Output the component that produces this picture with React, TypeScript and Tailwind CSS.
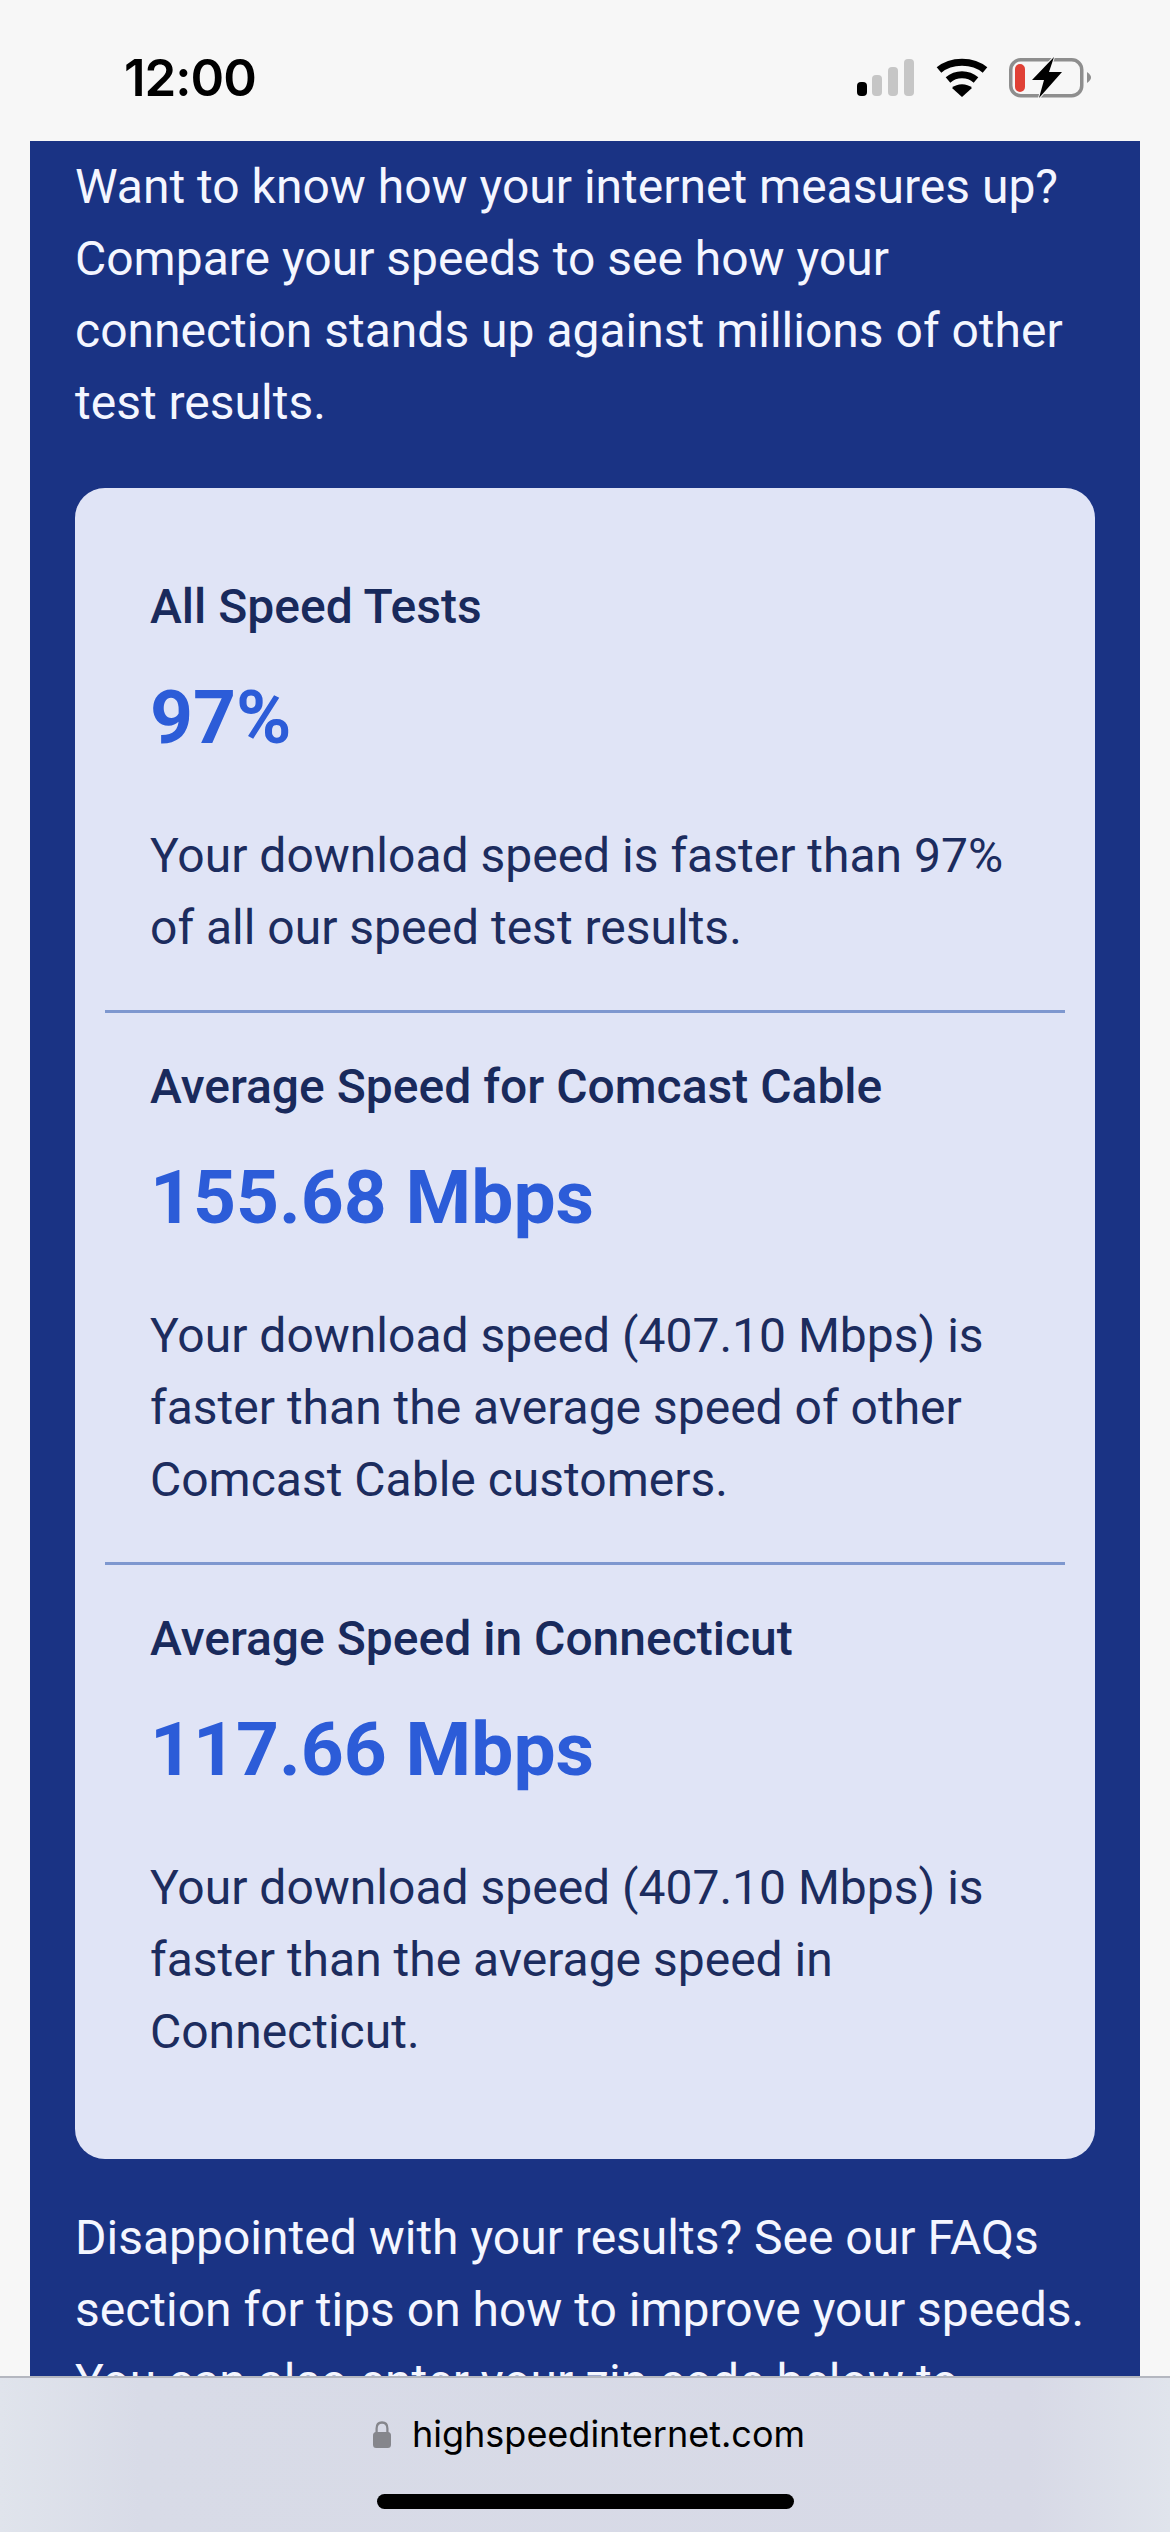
const stats = [
  {
    title: 'All Speed Tests',
    value: '97%',
    text: ['Your download speed is faster than 97%', 'of all our speed test results.'],
  },
  {
    title: 'Average Speed for Comcast Cable',
    value: '155.68 Mbps',
    text: ['Your download speed (407.10 Mbps) is', 'faster than the average speed of other', 'Comcast Cable customers.'],
  },
  {
    title: 'Average Speed in Connecticut',
    value: '117.66 Mbps',
    text: ['Your download speed (407.10 Mbps) is', 'faster than the average speed in', 'Connecticut.'],
  },
]

function StatusIcons() {
  return (
    <svg width="240" height="44" viewBox="0 0 240 44" className="block">
      {/* signal */}
      <rect x="0" y="26" width="10" height="14" rx="4" fill="#000" />
      <rect x="15" y="19" width="10" height="21" rx="4" fill="#c6c6c6" />
      <rect x="31" y="11" width="10" height="29" rx="4" fill="#c6c6c6" />
      <rect x="47" y="3" width="10" height="37" rx="4" fill="#c6c6c6" />
      {/* wifi */}
      <path d="M82 14C94 3.500 116 3.500 128 14" fill="none" stroke="#000" strokeWidth="7" />
      <path d="M91 24C99 17 111 17 119 24" fill="none" stroke="#000" strokeWidth="7" />
      <path d="M105 41L95 32C100 27 110 27 115 32Z" fill="#000" />
      {/* battery */}
      <rect x="153.750" y="3.750" width="71" height="36" rx="10" fill="none" stroke="#8e8e8e" strokeWidth="3.500" />
      <path d="M230 16C233 18 234 20 234 21.500C234 23 233 25 230 27Z" fill="#8e8e8e" />
      <rect x="158" y="8" width="10" height="28" rx="5" fill="#e04136" />
      <path d="M197 1L175 24H187L182 42L205 16H192L197 1Z" fill="#000" stroke="#f7f7f7" strokeWidth="2" paintOrder="stroke" />
    </svg>
  )
}

function Stat({ title, value, text, last }: { title: string; value: string; text: string[]; last: boolean }) {
  return (
    <div className={last ? 'px-[45px] pt-[38px]' : 'px-[45px] pt-[38px] pb-[46px] border-b-[3px] border-[#7e97cf]'}>
      <h3 className="text-[48px] leading-[72px] font-medium text-[#192a5c]">{title}</h3>
      <div className="text-[75px] leading-[88px] font-bold text-[#2c5cd8] mt-[30px]">{value}</div>
      <p className="text-[48px] leading-[72px] text-[#1c2c5e] mt-[59px]">
        {text.map((line) => (
          <span key={line} className="block whitespace-nowrap">{line}</span>
        ))}
      </p>
    </div>
  )
}

export default function App() {
  return (
    <div className="relative h-[2532px] w-[1170px] overflow-hidden bg-[#f7f7f7] font-['Roboto',sans-serif]">
      <header className="h-[141px] flex items-start justify-between pl-[124px] pr-[73px]">
        <span className="mt-[48px] text-[51px] leading-[60px] font-semibold text-black font-['Inter',sans-serif] tracking-[-1px]">12:00</span>
        <div className="mt-[56px]">
          <StatusIcons />
        </div>
      </header>

      <main className="mx-[30px] bg-[#1a3384] px-[45px] pt-[10px] pb-[100px] text-[48px] leading-[72px] text-[#f4f6ff]">
        <p>
          <span className="block whitespace-nowrap">Want to know how your internet measures up?</span>
          <span className="block whitespace-nowrap">Compare your speeds to see how your</span>
          <span className="block whitespace-nowrap">connection stands up against millions of other</span>
          <span className="block whitespace-nowrap">test results.</span>
        </p>

        <div className="mt-[49px] rounded-[30px] bg-[#e0e4f6] px-[30px] pt-[45px] pb-[91px]">
          {stats.map((s, i) => (
            <Stat key={s.title} title={s.title} value={s.value} text={s.text} last={i === stats.length - 1} />
          ))}
        </div>

        <p className="mt-[43px]">
          <span className="block whitespace-nowrap">Disappointed with your results? See our FAQs</span>
          <span className="block whitespace-nowrap">section for tips on how to improve your speeds.</span>
          <span className="block whitespace-nowrap">You can also enter your zip code below to</span>
        </p>
      </main>

      <div className="absolute inset-x-0 bottom-0 h-[156px] border-t-2 border-[#b4b7c0] bg-[linear-gradient(90deg,#e0e4ec_0%,#d8dbe7_12%,#d7d9e6_88%,#e0e4ec_100%)]">
        <div className="mt-[31px] flex items-center justify-center gap-[21px] pl-[8px]">
          <svg width="18" height="27" viewBox="0 0 20 27" preserveAspectRatio="none">
            <path d="M4 12V7.500C4 3.500 6.500 1.500 10 1.500C13.500 1.500 16 3.500 16 7.500V12" fill="none" stroke="#85868c" strokeWidth="2.500" />
            <rect x="0" y="11" width="20" height="16" rx="3.500" fill="#85868c" />
          </svg>
          <span className="text-[36px] leading-[50px] text-black font-['Inter',sans-serif]">highspeedinternet.com</span>
        </div>
        <div className="mx-auto mt-[35px] h-[15px] w-[417px] rounded-full bg-black" />
      </div>
    </div>
  )
}
